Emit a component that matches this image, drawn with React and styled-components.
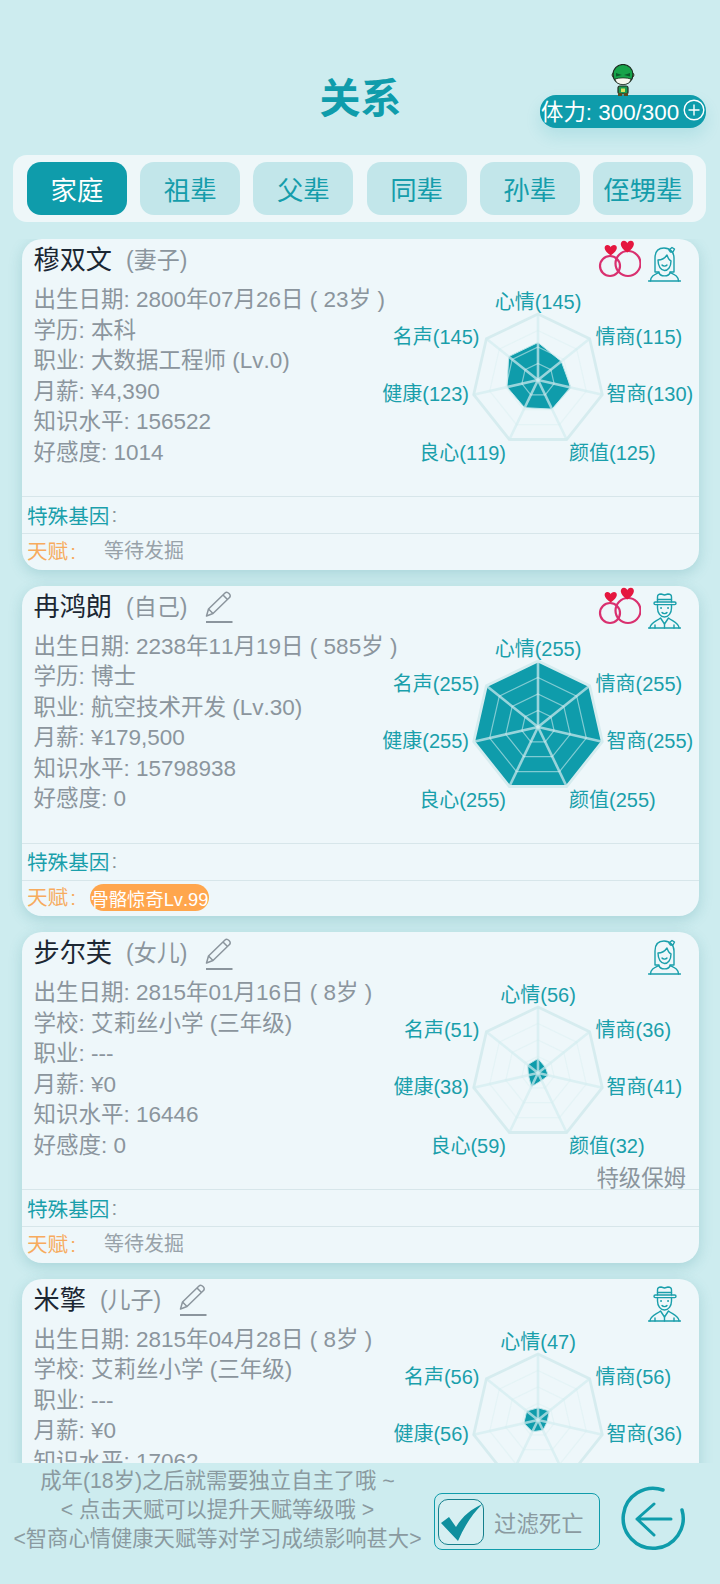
import React from 'react'
import styled, { createGlobalStyle } from 'styled-components'

const TEAL = '#0f9cab'
const GRAY = '#8b959d'

const GlobalStyle = createGlobalStyle`
    html, body {
        margin: 0;
        padding: 0;
        background: #cdecef;
    }
    * {
        box-sizing: border-box;
    }
`

const Page = styled.div`
    width: 720px;
    height: 1584px;
    display: flex;
    flex-direction: column;
    overflow: hidden;
    background: #cdecef;
    font-family: "Liberation Sans", "Noto Sans CJK SC", sans-serif;
    font-kerning: none;
`

const Header = styled.div`
    height: 155px;
    padding: 72px 14px 0 13px;
    display: grid;
    grid-template-columns: 1fr auto 1fr;
    align-items: start;
`

const Title = styled.h1`
    grid-column: 2;
    margin: 0;
    padding: 2px 0 0 2px;
    font-size: 41px;
    line-height: 50px;
    font-weight: 700;
    color: ${TEAL};
`

const Stamina = styled.div`
    position: relative;
    justify-self: end;
    margin-top: 23px;
    width: 166px;
    height: 33px;
    padding: 0 1px 3px 1px;
    display: flex;
    align-items: center;
    justify-content: space-between;
    border-radius: 16px;
    background: ${TEAL};
    color: #fff;
    font-size: 22.4px;
    white-space: nowrap;
    box-shadow: 0 8px 16px rgba(15, 156, 171, 0.14);
`

const Hero = styled.svg`
    position: absolute;
    top: -31px;
    left: 71px;
    width: 24px;
    height: 32px;
`

const TabBar = styled.div`
    height: 67px;
    margin: 0 14px 17px 13px;
    padding: 7px 13px 7px 14px;
    display: flex;
    justify-content: space-between;
    border-radius: 14px;
    background: #eef7f9;
`

const Tab = styled.div`
    width: 100px;
    padding-bottom: 1px;
    display: flex;
    align-items: center;
    justify-content: center;
    border-radius: 14px;
    font-size: 26.4px;
    background: ${p => (p.$active ? TEAL : '#c2e6ea')};
    color: ${p => (p.$active ? '#fff' : '#159dab')};
`

const List = styled.div`
    flex: 1;
    min-height: 0;
    overflow: hidden;
    padding: 0 21px 0 22px;
    display: flex;
    flex-direction: column;
    gap: 16px;
`

const Card = styled.div`
    flex-shrink: 0;
    height: 330.5px;
    display: flex;
    flex-direction: column;
    border-radius: 20px;
    background: #eef7fa;
    box-shadow: 0 4px 14px rgba(40, 130, 140, 0.22);
`

const CardHead = styled.div`
    height: 44px;
    padding: 0 18px 0 11.5px;
    display: flex;
    align-items: flex-start;
    justify-content: space-between;
`

const NameRow = styled.div`
    height: 44px;
    padding-bottom: 6px;
    display: flex;
    align-items: center;
`

const Name = styled.span`
    font-size: 26.2px;
    color: #1c2733;
`

const Role = styled.span`
    margin-left: 14px;
    font-size: 23px;
    color: ${GRAY};
`

const EditIcon = styled.svg`
    margin: 5px 0 0 18px;
    width: 28px;
    height: 32px;
`

const HeadIcons = styled.div`
    display: flex;
    align-items: flex-start;
    gap: 7px;
    padding-top: 1px;
`

const AvatarIcon = styled.svg`
    margin-top: 6px;
    width: 33px;
    height: 36px;
`

const CardBody = styled.div`
    position: relative;
    height: 213px;
    display: flex;
`

const Info = styled.div`
    flex: 1;
    min-width: 0;
    padding: 2px 0 0 11.5px;
    white-space: nowrap;
`

const InfoLine = styled.div`
    font-size: 22.5px;
    line-height: 30.5px;
    color: ${GRAY};
`

const RadarSvg = styled.svg`
    flex-shrink: 0;
    width: 320px;
    height: 213px;
    overflow: visible;
`

const RadarLabel = styled.text`
    font-size: 20px;
    fill: #1a9fab;
`

const Nanny = styled.div`
    position: absolute;
    right: 13px;
    bottom: -1px;
    font-size: 22.4px;
    line-height: 22px;
    color: ${GRAY};
`

const GeneRow = styled.div`
    height: 37px;
    padding: 0 4px 1px 5px;
    display: flex;
    align-items: center;
    border-top: 1px solid #d7e6ea;
    font-size: 20.6px;
    color: #1a9fab;
`

const Colon = styled.span`
    margin-left: 2px;
    color: ${p => p.$color};
`

const TalentRow = styled(GeneRow)`
    flex: 1;
    height: auto;
    padding-bottom: 4px;
    color: #f7ab5e;
`

const TalentLabel = styled.span`
    width: 63px;
    flex-shrink: 0;
`

const TalentPending = styled.span`
    margin-left: 14px;
    font-size: 20px;
    color: #98a2a9;
`

const TalentPill = styled.span`
    width: 119px;
    height: 27px;
    margin-top: 3px;
    display: flex;
    align-items: center;
    justify-content: center;
    white-space: nowrap;
    border-radius: 14px;
    background: #ffa64d;
    color: #fff;
    font-size: 18.3px;
`

const Footer = styled.div`
    height: 121px;
    flex-shrink: 0;
    padding: 4px 0 0 12px;
    display: flex;
    align-items: flex-start;
    background: #cdecef;
`

const Notes = styled.div`
    width: 411px;
    flex-shrink: 0;
    text-align: center;
    white-space: nowrap;
    font-size: 21.3px;
    line-height: 29px;
    color: #8a9aa0;
`

const Filter = styled.div`
    margin: 26px 0 0 11px;
    width: 166px;
    height: 57px;
    padding: 0 0 0 3px;
    display: flex;
    align-items: center;
    gap: 10px;
    border: 1.5px solid ${TEAL};
    border-radius: 8px;
    font-size: 22.4px;
    color: #8a9aa0;
`

const CheckBox = styled.div`
    width: 46px;
    height: 46px;
    display: flex;
    align-items: center;
    justify-content: center;
    border: 1.5px solid #157f8c;
    border-radius: 10px;
    background: #d6eff2;
`

const BackButton = styled.svg`
    margin: 18px 0 0 20px;
    width: 68px;
    height: 68px;
`

const SPOKES = 7
const OUTER = 66
const CX = 159
const CY = 97
const MAX = 255

const point = (i, r) => {
    const a = (i / SPOKES) * Math.PI * 2
    return [CX + r * Math.sin(a), CY - r * Math.cos(a)]
}

const polygon = radii =>
    radii.map((r, i) => point(i, r).map(n => n.toFixed(1)).join(',')).join(' ')

const LABEL_SPOTS = [
    { x: 159, y: 26, anchor: 'middle' },
    { x: 216.500, y: 61, anchor: 'start' },
    { x: 227.5, y: 118, anchor: 'start' },
    { x: 190, y: 177, anchor: 'start' },
    { x: 127, y: 177, anchor: 'end' },
    { x: 90, y: 118, anchor: 'end' },
    { x: 100.500, y: 61, anchor: 'end' },
]

const LABEL_NAMES = ['心情', '情商', '智商', '颜值', '良心', '健康', '名声']

const Radar = ({ values }) => (
    <RadarSvg viewBox="0 0 320 213">
        <polygon
            points={polygon(values.map(v => (v / MAX) * OUTER))}
            fill={TEAL}
            stroke="#bfe6ea"
            strokeWidth="1"
        />
        {[0.25, 0.5, 0.75].map(f => (
            <polygon
                key={f}
                points={polygon(values.map(() => f * OUTER))}
                fill="none"
                stroke="#dcf0f3"
                strokeOpacity="0.55"
                strokeWidth="1.2"
            />
        ))}
        <polygon
            points={polygon(values.map(() => OUTER))}
            fill="none"
            stroke="#d6ecef"
            strokeWidth="2.8"
        />
        {values.map((_, i) => {
            const [x, y] = point(i, OUTER)
            return (
                <line key={i} x1={CX} y1={CY} x2={x} y2={y} stroke="#d3ecef" strokeOpacity="0.7" strokeWidth="2.6" />
            )
        })}
        {values.map((v, i) => (
            <RadarLabel key={i} x={LABEL_SPOTS[i].x} y={LABEL_SPOTS[i].y} textAnchor={LABEL_SPOTS[i].anchor}>
                {LABEL_NAMES[i]}({v})
            </RadarLabel>
        ))}
    </RadarSvg>
)

const Rings = () => (
    <svg width="43" height="38" viewBox="0 0 43 38">
        <g fill="none" stroke="#d9306f" strokeWidth="2.2">
            <circle cx="12" cy="26" r="10" />
            <circle cx="30" cy="23.500" r="12.500" />
        </g>
        <path d="M12.700 15.500 C5 10.500 5.500 5 9.500 5 C11 5 12.200 6 12.700 7.200 C13.200 6 14.400 5 16 5 C20 5 20.500 10.500 12.700 15.500Z" fill="#e5173f" />
        <path d="M29.300 12.500 C21 7.500 21.500 0.800 26 0.800 C27.600 0.800 28.800 1.800 29.300 3.200 C29.800 1.800 31 0.800 32.800 0.800 C37.300 0.800 37.600 7.500 29.300 12.500Z" fill="#e5173f" />
    </svg>
)

const Woman = () => (
    <AvatarIcon viewBox="0 0 33 36" fill="none" stroke="#1a9fab" strokeWidth="1.4" strokeLinecap="round" strokeLinejoin="round">
        <path d="M11 26 H7 V12 C7 5 11 2 16 2 C22 2 26 6 26 12 V26 H22" />
        <path d="M10 14 C14 14 17 12 19 9 C20 12 21 14 23 15 C23 21 20 24.500 16.500 24.500 C13 24.500 10 20.500 10 14Z" />
        <path d="M14 19 C15 20.500 18 20.500 19 19" />
        <path d="M21 4 L24 1.500 L26.500 3 L25 6 L22.500 6Z" />
        <path d="M0.500 35 H32.500" />
        <path d="M2.500 35 C2.500 30 7 28.500 11 26.500 C12 31 21 31 22 26.500 C26 28.500 30.500 30 30.500 35" />
    </AvatarIcon>
)

const Man = () => (
    <AvatarIcon viewBox="0 0 33 36" fill="none" stroke="#1a9fab" strokeWidth="1.4" strokeLinecap="round" strokeLinejoin="round">
        <path d="M9.500 9 V4 C9.500 2 11 1 13 1 L16.500 2 L20 1 C22 1 23.500 2 23.500 4 V9" />
        <path d="M9.500 6.500 H23.500" />
        <rect x="6" y="9" width="22" height="2.600" rx="1.300" />
        <path d="M9.500 11.500 V15 C9.500 20 12.500 24 16.500 24 C20.500 24 23.500 20 23.500 15 V11.500" />
        <path d="M14 19.500 C15 21 18 21 19 19.500" />
        <path d="M13 15 H13.100 M20 15 H20.100" strokeWidth="1.800" />
        <path d="M0.500 35 H32.500" />
        <path d="M2 35 C2 30 8 28.500 12.500 25 L16.500 31 L20.500 25 C25 28.500 31 30 31 35" />
        <path d="M16.500 31 V35 M7 35 V32 M26 35 V32" />
    </AvatarIcon>
)

const Pencil = () => (
    <EditIcon viewBox="0 0 28 32" fill="none" stroke={GRAY} strokeWidth="1.5" strokeLinejoin="round">
        <path d="M1.500 25 L3.500 18 L20 2 C21 1 22.500 1 24 2.500 C25.500 4 25.500 5.500 24.500 6.500 L8 22.500Z" />
        <path d="M3.500 18 L8 22.500 M18 4 L22.500 8.500" />
        <path d="M1 31 H27.500" strokeWidth="2" />
    </EditIcon>
)

const HeroSprite = () => (
    <Hero viewBox="0 0 24 32">
        <rect x="7" y="22" width="10" height="8" rx="2" fill="#1e9a50" stroke="#1c2b20" strokeWidth="1.200" />
        <rect x="10" y="24.500" width="4" height="3.500" fill="#d8e05a" />
        <rect x="7" y="29" width="4" height="3" fill="#5c4a1e" />
        <rect x="13" y="29" width="4" height="3" fill="#5c4a1e" />
        <circle cx="3" cy="11" r="2" fill="#c9a877" stroke="#1c2b20" strokeWidth="0.800" />
        <circle cx="21" cy="11" r="2" fill="#c9a877" stroke="#1c2b20" strokeWidth="0.800" />
        <circle cx="12" cy="10.500" r="10" fill="#16a34a" stroke="#1c2b20" strokeWidth="1.200" />
        <path d="M4 15 C5 22.500 19 22.500 20 15 C16 13.500 8 13.500 4 15Z" fill="#f6f6ee" stroke="#1c2b20" strokeWidth="0.800" />
        <path d="M5 9 L11 11 L5 12.500Z M19 9 L13 11 L19 12.500Z" fill="#0b5c2c" />
    </Hero>
)

const family = [
    {
        name: '穆双文',
        role: '(妻子)',
        avatar: 'woman',
        rings: true,
        lines: ['出生日期: 2800年07月26日 ( 23岁 )', '学历: 本科', '职业: 大数据工程师 (Lv.0)', '月薪: ¥4,390', '知识水平: 156522', '好感度: 1014'],
        values: [145, 115, 130, 125, 119, 123, 145],
    },
    {
        name: '冉鸿朗',
        role: '(自己)',
        avatar: 'man',
        rings: true,
        edit: true,
        talent: '骨骼惊奇Lv.99',
        lines: ['出生日期: 2238年11月19日 ( 585岁 )', '学历: 博士', '职业: 航空技术开发 (Lv.30)', '月薪: ¥179,500', '知识水平: 15798938', '好感度: 0'],
        values: [255, 255, 255, 255, 255, 255, 255],
    },
    {
        name: '步尔芙',
        role: '(女儿)',
        avatar: 'woman',
        edit: true,
        nanny: '特级保姆',
        lines: ['出生日期: 2815年01月16日 ( 8岁 )', '学校: 艾莉丝小学 (三年级)', '职业: ---', '月薪: ¥0', '知识水平: 16446', '好感度: 0'],
        values: [56, 36, 41, 32, 59, 38, 51],
    },
    {
        name: '米擎',
        role: '(儿子)',
        avatar: 'man',
        edit: true,
        lines: ['出生日期: 2815年04月28日 ( 8岁 )', '学校: 艾莉丝小学 (三年级)', '职业: ---', '月薪: ¥0', '知识水平: 17062', '好感度: 0'],
        values: [47, 56, 36, 44, 50, 56, 56],
    },
]

const tabs = ['家庭', '祖辈', '父辈', '同辈', '孙辈', '侄甥辈']

const App = () => {
    return (
        <>
            <GlobalStyle />
            <Page>
                <Header>
                    <Title>关系</Title>
                    <Stamina>
                        <HeroSprite />
                        <span>体力: 300/300</span>
                        <svg width="22" height="22" viewBox="0 0 22 22" fill="none" stroke="#fff" strokeWidth="1.400">
                            <circle cx="11" cy="11" r="9.800" />
                            <path d="M11 5.500 V16.500 M5.500 11 H16.500" />
                        </svg>
                    </Stamina>
                </Header>

                <TabBar>
                    {tabs.map((t, i) => (
                        <Tab key={t} $active={i === 0}>{t}</Tab>
                    ))}
                </TabBar>

                <List>
                    {family.map(m => (
                        <Card key={m.name}>
                            <CardHead>
                                <NameRow>
                                    <Name>{m.name}</Name>
                                    <Role>{m.role}</Role>
                                    {m.edit && <Pencil />}
                                </NameRow>
                                <HeadIcons>
                                    {m.rings && <Rings />}
                                    {m.avatar === 'woman' ? <Woman /> : <Man />}
                                </HeadIcons>
                            </CardHead>
                            <CardBody>
                                <Info>
                                    {m.lines.map(l => (
                                        <InfoLine key={l}>{l}</InfoLine>
                                    ))}
                                </Info>
                                <Radar values={m.values} />
                                {m.nanny && <Nanny>{m.nanny}</Nanny>}
                            </CardBody>
                            <GeneRow>特殊基因<Colon $color={GRAY}>:</Colon></GeneRow>
                            <TalentRow>
                                <TalentLabel>天赋<Colon>:</Colon></TalentLabel>
                                {m.talent ? <TalentPill>{m.talent}</TalentPill> : <TalentPending>等待发掘</TalentPending>}
                            </TalentRow>
                        </Card>
                    ))}
                </List>

                <Footer>
                    <Notes>
                        <div>成年(18岁)之后就需要独立自主了哦 ~</div>
                        <div>&lt; 点击天赋可以提升天赋等级哦 &gt;</div>
                        <div>&lt;智商心情健康天赋等对学习成绩影响甚大&gt;</div>
                    </Notes>
                    <Filter>
                        <CheckBox>
                            <svg width="43" height="40" viewBox="0 0 43 40">
                                <path d="M1 21 L9 15 L16 25 C22 15 31 7 42.500 2 C32 12 24 25 18 39 Z" fill="#0f8f9e" />
                            </svg>
                        </CheckBox>
                        <span>过滤死亡</span>
                    </Filter>
                    <BackButton viewBox="0 0 68 68" fill="none" stroke={TEAL} strokeLinecap="round">
                        <path d="M43 5 A30 30 0 1 0 62 25" strokeWidth="3.500" />
                        <path d="M51 34 H17 M34 19 L17 34 L34 50" strokeWidth="3" strokeLinejoin="round" />
                    </BackButton>
                </Footer>
            </Page>
        </>
    )
}

export default App
